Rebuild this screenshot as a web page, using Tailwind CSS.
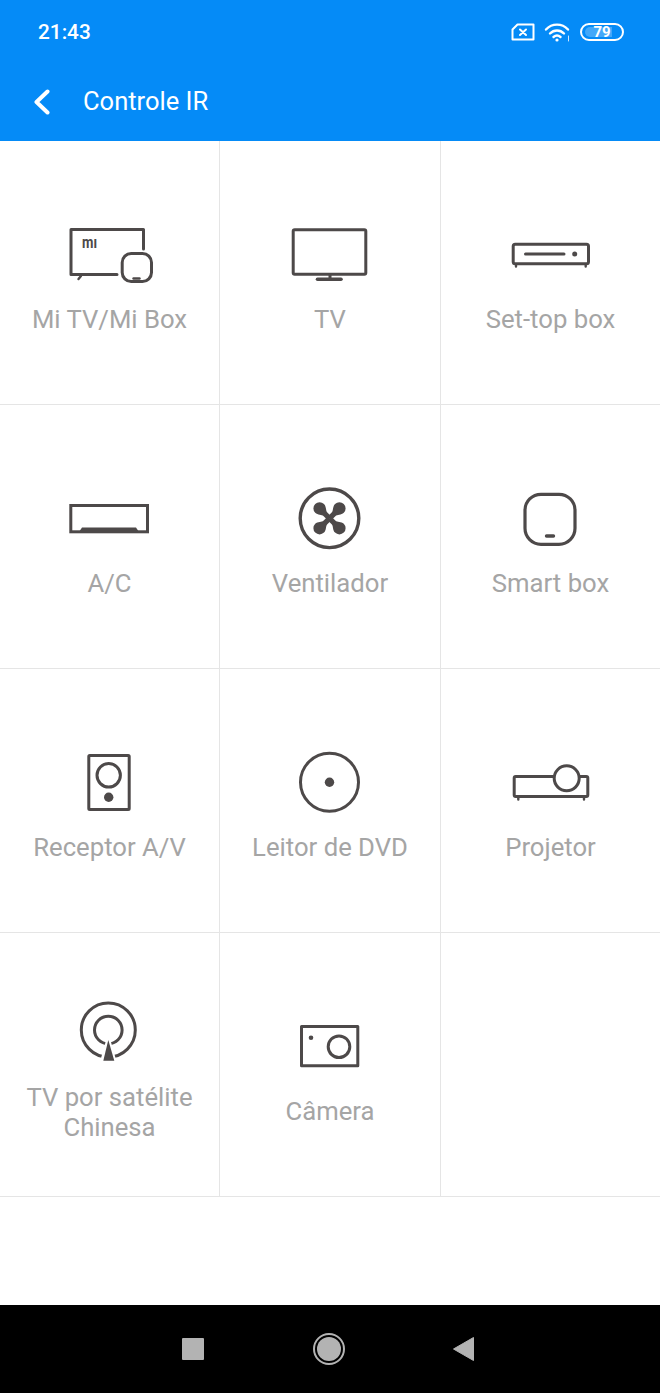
<!DOCTYPE html>
<html lang="en">
<head>
  <meta charset="UTF-8" />
  <meta name="viewport" content="width=device-width, initial-scale=1.0"/>
  <title>Controle IR</title>
  <script src="https://cdn.jsdelivr.net/npm/@tailwindcss/browser@4"></script>
</head>
<body class="bg-white font-['Roboto',sans-serif] overflow-hidden">
  <div class="flex flex-col w-[660px] h-[1393px]">

    <!-- status bar + toolbar -->
    <header class="bg-[#058bf7] text-white h-[141px] shrink-0">
      <div class="flex items-center justify-between h-[64px] pl-[38px] pr-[36px]">
        <span class="text-[20.8px] font-medium leading-none">21:43</span>
        <div class="flex items-center">
          <svg class="w-[24px] h-[18px]" viewBox="0 0 24 18" fill="none" stroke="white" stroke-width="2" stroke-linejoin="round" stroke-linecap="round">
            <path d="M6.5 1.5H22.5V16.5H1.5V6.5Z"/>
            <path d="M9 6.5L15 12M15 6.5L9 12"/>
          </svg>
          <svg class="w-[27px] h-[20px] ml-[9px]" viewBox="0 0 27 20" fill="none" stroke="white" stroke-width="2.4" stroke-linecap="round">
            <path d="M2 7.5C8 1 18 1 24 7.5"/>
            <path d="M6 11.5C10 7.5 16 7.5 20 11.5"/>
            <path d="M9.5 15C11.5 13.4 14.5 13.4 16.5 15"/>
            <circle cx="13" cy="18" r="1.6" fill="white" stroke="none"/>
            <path d="M24.5 14V19" stroke-width="1" stroke="#cfe6fd"/>
          </svg>
          <div class="relative w-[44px] h-[18px] ml-[9px] rounded-full border-2 border-white overflow-hidden">
            <div class="absolute left-[3px] top-[2px] bottom-[2px] w-[27px] bg-white/25 rounded-l-full"></div>
            <span class="absolute inset-0 flex items-center justify-center text-[15px] font-bold leading-none">79</span>
          </div>
        </div>
      </div>
      <div class="flex items-center h-[75px]">
        <svg class="w-[16px] h-[26px] ml-[34px]" viewBox="0 0 16 26" fill="none" stroke="white" stroke-width="4" stroke-linecap="round" stroke-linejoin="round">
          <path d="M13.5 2.5L2.5 13L13.5 23.5"/>
        </svg>
        <h1 class="ml-[33px] text-[25.5px] leading-none">Controle IR</h1>
      </div>
    </header>

    <!-- remote types -->
    <main class="grid grid-cols-[220px_221px_219px] grid-rows-[repeat(4,264px)] text-[25.7px] leading-[30px] text-[#a5a5a5] text-center shrink-0">

      <div class="flex flex-col items-center justify-center border-r border-b border-[#e5e5e5]">
        <svg class="w-[99px] h-[76px] mb-[16px]" viewBox="0 0 99 76" fill="none" stroke="#4d4949" stroke-width="3" stroke-linecap="round" stroke-linejoin="round">
          <path d="M83.5 37V17.5H11V62.5H57"/>
          <path d="M21 64L18.5 67" stroke-width="2.4"/>
          <text x="22" y="35.5" font-size="16" font-weight="700" fill="#4d4949" stroke="none" textLength="15" lengthAdjust="spacingAndGlyphs" font-family="Roboto">mı</text>
          <rect x="62.2" y="41.5" width="29.3" height="28" rx="9"/>
          <path d="M73.5 66.5H79.5" stroke-width="2.4"/>
        </svg>
        <span>Mi TV/Mi Box</span>
      </div>

      <div class="flex flex-col items-center justify-center border-r border-b border-[#e5e5e5]">
        <svg class="w-[100px] h-[76px] mb-[16px]" viewBox="0 0 100 76" fill="none" stroke="#4d4949" stroke-width="3" stroke-linecap="round" stroke-linejoin="round">
          <rect x="13.2" y="17.8" width="72.6" height="44.4" rx="1.5"/>
          <path d="M50 63V67"/>
          <path d="M37.5 67.2H61" stroke-width="3.6"/>
        </svg>
        <span>TV</span>
      </div>

      <div class="flex flex-col items-center justify-center border-b border-[#e5e5e5]">
        <svg class="w-[99px] h-[76px] mb-[16px]" viewBox="0 0 99 76" fill="none" stroke="#4d4949" stroke-width="3" stroke-linecap="round" stroke-linejoin="round">
          <rect x="12.2" y="32.2" width="75.3" height="19.6" rx="2"/>
          <path d="M24.5 42H63"/>
          <circle cx="73.7" cy="42" r="2.5" fill="#4d4949" stroke="none"/>
          <path d="M15 53V54.5M84.7 53V54.5" stroke-width="2.4"/>
        </svg>
        <span>Set-top box</span>
      </div>

      <div class="flex flex-col items-center justify-center border-r border-b border-[#e5e5e5]">
        <svg class="w-[99px] h-[76px] mb-[16px]" viewBox="0 0 99 76" fill="none" stroke="#4d4949" stroke-width="3" stroke-linejoin="miter">
          <rect x="10.8" y="29.5" width="76.7" height="26.3"/>
          <path d="M19 56L22 51.5H76L79 56Z" fill="#4d4949" stroke="none"/>
        </svg>
        <span>A/C</span>
      </div>

      <div class="flex flex-col items-center justify-center border-r border-b border-[#e5e5e5]">
        <svg class="w-[100px] h-[76px] mb-[16px]" viewBox="0 0 100 76" fill="none" stroke="#4d4949" stroke-width="3.4" stroke-linecap="round">
          <circle cx="49.5" cy="42.3" r="29.3"/>
          <g fill="#4d4949" stroke="none" transform="translate(49.5 42.3)">
            <path transform="rotate(-45)" d="M-2.6 0L-2.6 -6C-2.6 -8 -6.2 -10.5 -6.2 -14A6.2 6.2 0 0 1 6.2 -14C6.2 -10.5 2.6 -8 2.6 -6L2.6 0Z"/>
            <path transform="rotate(45)" d="M-2.6 0L-2.6 -6C-2.6 -8 -6.2 -10.5 -6.2 -14A6.2 6.2 0 0 1 6.2 -14C6.2 -10.5 2.6 -8 2.6 -6L2.6 0Z"/>
            <path transform="rotate(135)" d="M-2.6 0L-2.6 -6C-2.6 -8 -6.2 -10.5 -6.2 -14A6.2 6.2 0 0 1 6.2 -14C6.2 -10.5 2.6 -8 2.6 -6L2.6 0Z"/>
            <path transform="rotate(225)" d="M-2.6 0L-2.6 -6C-2.6 -8 -6.2 -10.5 -6.2 -14A6.2 6.2 0 0 1 6.2 -14C6.2 -10.5 2.6 -8 2.6 -6L2.6 0Z"/>
          </g>
        </svg>
        <span>Ventilador</span>
      </div>

      <div class="flex flex-col items-center justify-center border-b border-[#e5e5e5]">
        <svg class="w-[99px] h-[76px] mb-[16px]" viewBox="0 0 99 76" fill="none" stroke="#4d4949" stroke-width="3.2" stroke-linecap="round">
          <rect x="24" y="18.3" width="50" height="50" rx="16"/>
          <path d="M45.5 60H52.5" stroke-width="3.4"/>
        </svg>
        <span>Smart box</span>
      </div>

      <div class="flex flex-col items-center justify-center border-r border-b border-[#e5e5e5]">
        <svg class="w-[99px] h-[76px] mb-[16px]" viewBox="0 0 99 76" fill="none" stroke="#4d4949" stroke-width="3" stroke-linejoin="round">
          <rect x="28.8" y="15.5" width="40.4" height="54" rx="1"/>
          <circle cx="48.7" cy="35.3" r="11.7"/>
          <circle cx="48.7" cy="57.3" r="4.7" fill="#4d4949" stroke="none"/>
        </svg>
        <span>Receptor A/V</span>
      </div>

      <div class="flex flex-col items-center justify-center border-r border-b border-[#e5e5e5]">
        <svg class="w-[100px] h-[76px] mb-[16px]" viewBox="0 0 100 76" fill="none" stroke="#4d4949" stroke-width="3">
          <circle cx="49.5" cy="42.3" r="29"/>
          <circle cx="49.5" cy="42.3" r="4.7" fill="#4d4949" stroke="none"/>
        </svg>
        <span>Leitor de DVD</span>
      </div>

      <div class="flex flex-col items-center justify-center border-b border-[#e5e5e5]">
        <svg class="w-[99px] h-[76px] mb-[16px]" viewBox="0 0 99 76" fill="none" stroke="#4d4949" stroke-width="3" stroke-linecap="round" stroke-linejoin="round">
          <rect x="13.2" y="36.5" width="73.6" height="20" rx="1.5"/>
          <circle cx="65.7" cy="38.3" r="12.5" fill="white"/>
          <path d="M17.3 58V59.5M83 58V59.5" stroke-width="2.4"/>
        </svg>
        <span>Projetor</span>
      </div>

      <div class="flex flex-col items-center justify-center border-r border-b border-[#e5e5e5]">
        <svg class="w-[99px] h-[76px] mt-[1px] mb-[17px]" viewBox="0 0 99 76" fill="none" stroke="#4d4949" stroke-width="3">
          <circle cx="48.3" cy="41" r="27"/>
          <circle cx="48.3" cy="41" r="13.8"/>
          <path d="M48.3 49L41.5 73H55.1Z" fill="white" stroke="white" stroke-width="3"/>
          <path d="M48.3 51L43.3 71.7H54.3Z" fill="#4d4949" stroke="none"/>
        </svg>
        <span>TV por satélite<br/>Chinesa</span>
      </div>

      <div class="flex flex-col items-center justify-center border-r border-b border-[#e5e5e5]">
        <svg class="w-[100px] h-[76px] mb-[16px]" viewBox="0 0 100 76" fill="none" stroke="#4d4949" stroke-width="3" stroke-linejoin="round">
          <rect x="21.5" y="22.5" width="56.3" height="39.3"/>
          <circle cx="59" cy="42.7" r="10.8"/>
          <circle cx="31" cy="33.7" r="2.3" fill="#4d4949" stroke="none"/>
        </svg>
        <span>Câmera</span>
      </div>

      <div class="border-b border-[#e5e5e5]"></div>
    </main>

    <div class="flex-1"></div>

    <!-- android nav bar -->
    <nav class="bg-black h-[88px] shrink-0 flex items-center pl-[182px]">
      <div class="w-[22px] h-[22px] bg-[#b3b3b3] rounded-[1px]"></div>
      <div class="ml-[109px] w-[32px] h-[32px] rounded-full border-2 border-[#b3b3b3] flex items-center justify-center">
        <div class="w-[24px] h-[24px] rounded-full bg-[#b3b3b3]"></div>
      </div>
      <svg class="ml-[108px] w-[21px] h-[24px]" viewBox="0 0 21 24">
        <path d="M0.5 12L20.5 0.5V23.5Z" fill="#b3b3b3" stroke="#b3b3b3" stroke-width="1" stroke-linejoin="round"/>
      </svg>
    </nav>
  </div>
</body>
</html>
